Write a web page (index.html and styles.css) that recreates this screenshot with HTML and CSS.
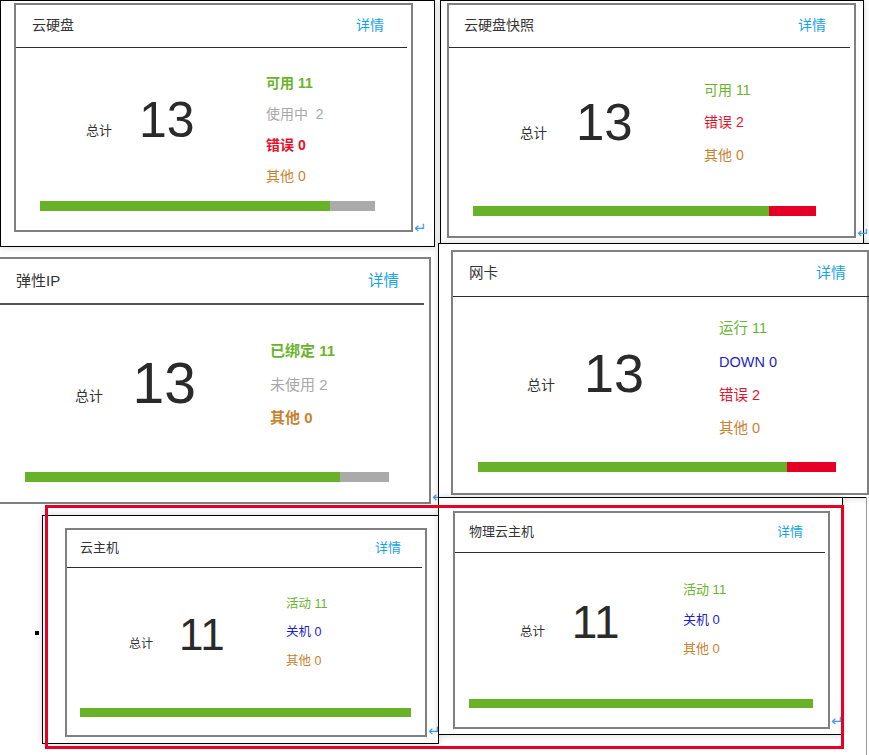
FILE: index.html
```html
<!DOCTYPE html>
<html lang="zh-CN">
<head>
<meta charset="utf-8">
<title>资源概览</title>
<link rel="stylesheet" href="styles.css">
</head>
<body>
<div class="canvas">

  <div class="frame f3">
    <div class="piece">
      <div class="card c3">
        <div class="head"><span class="title">弹性IP</span><a class="link">详情</a></div>
        <div class="body">
          <div class="total"><span class="label">总计</span><span class="num">13</span></div>
          <ul class="stats">
            <li class="ok strong">已绑定 11</li>
            <li class="idle">未使用 2</li>
            <li class="other strong">其他 0</li>
          </ul>
        </div>
        <div class="bar"><span class="seg ok" style="width:315px"></span><span class="seg rest idle"></span></div>
      </div>
      <span class="ret">↵</span>
    </div>
  </div>

  <div class="frame f1">
    <div class="piece">
      <div class="card c1">
        <div class="head"><span class="title">云硬盘</span><a class="link">详情</a></div>
        <div class="body">
          <div class="total"><span class="label">总计</span><span class="num">13</span></div>
          <ul class="stats">
            <li class="ok strong">可用 11</li>
            <li class="idle">使用中&nbsp; 2</li>
            <li class="err strong">错误 0</li>
            <li class="other">其他 0</li>
          </ul>
        </div>
        <div class="bar"><span class="seg ok" style="width:290px"></span><span class="seg rest idle"></span></div>
      </div>
      <span class="ret">↵</span>
    </div>
  </div>

  <div class="frame f2">
    <div class="piece">
      <div class="card c2">
        <div class="head"><span class="title">云硬盘快照</span><a class="link">详情</a></div>
        <div class="body">
          <div class="total"><span class="label">总计</span><span class="num">13</span></div>
          <ul class="stats">
            <li class="ok">可用 11</li>
            <li class="err">错误 2</li>
            <li class="other">其他 0</li>
          </ul>
        </div>
        <div class="bar"><span class="seg ok" style="width:296px"></span><span class="seg rest err"></span></div>
      </div>
      <span class="ret">↵</span>
    </div>
  </div>

  <div class="frame f4">
    <div class="piece">
      <div class="card c4">
        <div class="head"><span class="title">网卡</span><a class="link">详情</a></div>
        <div class="body">
          <div class="total"><span class="label">总计</span><span class="num">13</span></div>
          <ul class="stats">
            <li class="ok">运行 11</li>
            <li class="down">DOWN 0</li>
            <li class="err">错误 2</li>
            <li class="other">其他 0</li>
          </ul>
        </div>
        <div class="bar"><span class="seg ok" style="width:309px"></span><span class="seg rest err"></span></div>
      </div>
    </div>
  </div>

  <div class="frame f5">
    <div class="piece">
      <div class="card c5">
        <div class="head"><span class="title">云主机</span><a class="link">详情</a></div>
        <div class="body">
          <div class="total"><span class="label">总计</span><span class="num">11</span></div>
          <ul class="stats">
            <li class="ok">活动 11</li>
            <li class="down">关机 0</li>
            <li class="other">其他 0</li>
          </ul>
        </div>
        <div class="bar"><span class="seg rest ok"></span></div>
      </div>
      <span class="ret">↵</span>
    </div>
  </div>

  <div class="frame f6">
    <div class="piece">
      <div class="card c6">
        <div class="head"><span class="title">物理云主机</span><a class="link">详情</a></div>
        <div class="body">
          <div class="total"><span class="label">总计</span><span class="num">11</span></div>
          <ul class="stats">
            <li class="ok">活动 11</li>
            <li class="down">关机 0</li>
            <li class="other">其他 0</li>
          </ul>
        </div>
        <div class="bar"><span class="seg rest ok"></span></div>
      </div>
      <span class="ret">↵</span>
    </div>
  </div>

  <div class="edge"></div>
  <div class="handle"></div>
  <div class="highlight"></div>
</div>
</body>
</html>
```

FILE: styles.css
```css
html, body {
  margin: 0;
  padding: 0;
  overflow: hidden;
  background: #ffffff;
}

.canvas {
  position: relative;
  width: 869px;
  height: 755px;
  overflow: hidden;
  font-family: "Liberation Sans", "Noto Sans CJK SC", sans-serif;
  color: #333333;
}

/* pasted screenshot frames on the free canvas */
.frame {
  position: absolute;
  box-sizing: border-box;
  border: 1px solid #000000;
  background: #ffffff;
  box-shadow: 0 0 7px rgba(0, 0, 0, 0.16);
  --rmb: 0px;
}

.f1 { left: 0; top: 0; width: 435px; height: 247px; padding: 2px 0 0 13px; --rmb: -2px; }
.f2 { left: 440px; top: 0; width: 424px; height: 244px; padding: 2px 0 0 6px; --rmb: -1px; }
.f3 { left: -12px; top: 250px; width: 451px; height: 256px; padding: 7px 0 0 8px; border: none; box-shadow: none; --rmb: 1px; }
.f4 { left: 438px; top: 243px; width: 440px; height: 255px; padding: 6px 0 0 12px; }
.f5 { left: 42px; top: 515px; width: 397px; height: 229px; padding: 12px 0 0 22px; }
.f6 { left: 438px; top: 497px; width: 405px; height: 238px; padding: 13px 0 0 14px; --rmb: 2px; }

.piece {
  display: flex;
  align-items: flex-end;
}

.ret {
  flex: none;
  margin: 0 0 var(--rmb) 1px;
  font-family: "DejaVu Sans", sans-serif;
  font-size: 15px;
  line-height: 12px;
  color: #3d9be8;
}

/* card */
.card {
  flex: none;
  box-sizing: border-box;
  width: var(--cw);
  height: var(--ch);
  border: 2px solid #808080;
  background: #ffffff;
  display: flex;
  flex-direction: column;
}

.head {
  flex: none;
  box-sizing: border-box;
  height: var(--hh);
  margin-right: var(--hmr);
  padding: 0 var(--hpr) 4px var(--hpl);
  border-bottom: 1px solid #2b2b2b;
  display: flex;
  align-items: center;
  justify-content: space-between;
  white-space: nowrap;
}

.title {
  font-size: var(--tfs);
  color: #333333;
}

.link {
  font-size: var(--lkfs);
  color: #16a3e8;
  text-decoration: none;
}

.body {
  flex: none;
  display: flex;
  align-items: flex-start;
}

.total {
  flex: none;
  box-sizing: border-box;
  width: var(--tw);
  padding-left: var(--tl);
  margin-top: var(--tt);
  font-size: var(--nfs);
  line-height: 1;
  white-space: nowrap;
}

.label {
  font-size: var(--lfs);
  vertical-align: 2px;
  color: #333333;
}

.num {
  margin-left: var(--ng);
  color: #2a2a2a;
}

.stats {
  list-style: none;
  margin: var(--st) 0 0 0;
  padding: 0;
  font-size: var(--sfs);
  line-height: var(--slh);
  white-space: nowrap;
}

.stats .ok { color: #69b42b; }
.stats .idle { color: #a8a8a8; }
.stats .err { color: #e8112d; }
.stats .other { color: #c8822e; }
.stats .down { color: #1e1ec8; }
.stats .strong { font-weight: bold; }

.bar {
  flex: none;
  display: flex;
  width: var(--bw);
  height: var(--bh);
  margin: auto 0 var(--bmb) var(--bml);
}

.seg { display: block; height: 100%; }
.seg.rest { flex: 1; }
.seg.ok { background: #67b226; }
.seg.idle { background: #aaaaaa; }
.seg.err { background: #e60026; }

/* per-card metrics */
.c1 { --cw: 399px; --ch: 229px; --hh: 43px; --hpl: 16px; --hpr: 23px; --hmr: 4px; --tfs: 14px; --lkfs: 14px;
      --tl: 70px; --tw: 250px; --tt: 46.7px; --lfs: 13px; --nfs: 50px; --ng: 27px;
      --st: 19.5px; --sfs: 14px; --slh: 31.3px; --bw: 335px; --bh: 10px; --bml: 24px; --bmb: 19px; }

.c2 { --cw: 409px; --ch: 235px; --hh: 43px; --hpl: 15px; --hpr: 24px; --hmr: 4px; --tfs: 14px; --lkfs: 14px;
      --tl: 71px; --tw: 255px; --tt: 48.7px; --lfs: 13.5px; --nfs: 51px; --ng: 29px;
      --st: 25.75px; --sfs: 14px; --slh: 32.5px; --bw: 343px; --bh: 10px; --bml: 24px; --bmb: 20px; }

.c3 { --cw: 435px; --ch: 247px; --hh: 46px; --hpl: 18px; --hpr: 25px; --hmr: 5px; --tfs: 15px; --lkfs: 15.5px;
      --tl: 77px; --tw: 272px; --tt: 49.7px; --lfs: 14px; --nfs: 57px; --ng: 29.6px;
      --st: 29.25px; --sfs: 15px; --slh: 33.5px; --bw: 364px; --bh: 10px; --bml: 27px; --bmb: 20px; }
.c3 .head { border-bottom: 2px solid #555555; }

.c4 { --cw: 418px; --ch: 245px; --hh: 45px; --hpl: 16px; --hpr: 24px; --hmr: -3px; --tfs: 14.5px; --lkfs: 15px;
      --tl: 74px; --tw: 266px; --tt: 49.3px; --lfs: 14px; --nfs: 54px; --ng: 28.9px;
      --st: 15.35px; --sfs: 14.5px; --slh: 33.3px; --bw: 358px; --bh: 10px; --bml: 25px; --bmb: 21px; }
.c4 .head { padding-bottom: 6px; }

.c5 { --cw: 362px; --ch: 209px; --hh: 38px; --hpl: 13px; --hpr: 21px; --hmr: 3px; --tfs: 13px; --lkfs: 13px;
      --tl: 62px; --tw: 219px; --tt: 44.8px; --lfs: 12px; --nfs: 44px; --ng: 26px;
      --st: 21.75px; --sfs: 12.5px; --slh: 28.5px; --bw: 331px; --bh: 9px; --bml: 13px; --bmb: 18px; }

.c6 { --cw: 377px; --ch: 218px; --hh: 40px; --hpl: 14px; --hpr: 22px; --hmr: 3px; --tfs: 13px; --lkfs: 13px;
      --tl: 65px; --tw: 228px; --tt: 46.1px; --lfs: 12.5px; --nfs: 46px; --ng: 26.8px;
      --st: 22.25px; --sfs: 13px; --slh: 29.5px; --bw: 344px; --bh: 9px; --bml: 14px; --bmb: 19px; }

/* decorations lying over the canvas */
.edge {
  position: absolute;
  left: 866px;
  top: 497px;
  width: 10px;
  height: 260px;
  border-left: 1px solid #9a9a9a;
  background: #ffffff;
}

.handle {
  position: absolute;
  left: 35px;
  top: 631px;
  width: 4px;
  height: 4px;
  background: #000000;
}

.highlight {
  position: absolute;
  left: 45px;
  top: 505px;
  width: 799px;
  height: 244px;
  box-sizing: border-box;
  border: 3px solid #e60026;
}
```
